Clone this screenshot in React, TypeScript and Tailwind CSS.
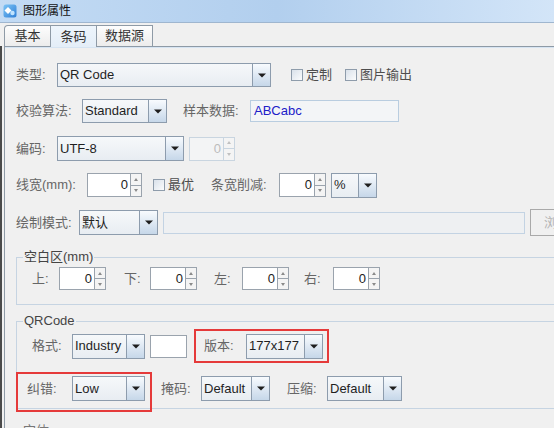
import React from "react";

const Arrow = () => (
  <svg width="8" height="5" viewBox="0 0 8 5">
    <path d="M0 0.5H8L4 4.5Z" fill="#1e1e1e" />
  </svg>
);

function Combo({ w, text, h = "h-[25px]" }: { w: string; text: string; h?: string }) {
  return (
    <div className={`flex shrink-0 border border-[#8d9cad] ${w} ${h}`}>
      <div className="flex flex-1 items-center overflow-hidden whitespace-nowrap bg-gradient-to-b from-[#f6f8fa] to-[#e8edf2] pl-[2px] text-[13px] text-[#1f1f1f]">
        {text}
      </div>
      <div className="flex w-[18px] shrink-0 items-center justify-center border-l border-[#8d9cad] bg-gradient-to-b from-[#f8fbfe] to-[#c6d7e9]">
        <Arrow />
      </div>
    </div>
  );
}

function Spinner({ w, h = "h-[24px]", disabled = false }: { w: string; h?: string; disabled?: boolean }) {
  const b = disabled ? "border-[#c9d5e0]" : "border-[#9aa3ad]";
  const tri = disabled ? "#c0c0c0" : "#8a8a8a";
  return (
    <div className={`flex shrink-0 border ${b} ${w} ${h}`}>
      <div
        className={`flex flex-1 items-center justify-end pr-[2px] text-[13px] ${
          disabled ? "bg-[#f3f4f5] text-[#bcbcbc]" : "bg-white text-[#222]"
        }`}
      >
        0
      </div>
      <div className={`flex w-[11px] shrink-0 flex-col border-l ${b}`}>
        <div className={`flex flex-1 items-center justify-center border-b ${b} bg-[#f4f4f4]`}>
          <svg width="4" height="3" viewBox="0 0 4 3">
            <path d="M0 3H4L2 0Z" fill={tri} />
          </svg>
        </div>
        <div className="flex flex-1 items-center justify-center bg-[#f4f4f4]">
          <svg width="4" height="3" viewBox="0 0 4 3">
            <path d="M0 0H4L2 3Z" fill={tri} />
          </svg>
        </div>
      </div>
    </div>
  );
}

function Check({ label }: { label: string }) {
  return (
    <div className="flex shrink-0 items-center gap-[3px]">
      <div className="h-[12px] w-[12px] border border-[#8e9cab] bg-gradient-to-br from-[#d9e1ea] to-[#fbfcfd]" />
      <span className="text-[13px] text-[#4d4d4d]">{label}</span>
    </div>
  );
}

function Label({ w, children }: { w: string; children: React.ReactNode }) {
  return <div className={`shrink-0 whitespace-nowrap text-[13px] text-[#666] ${w}`}>{children}</div>;
}

export default function App() {
  return (
    <div className="h-[428px] w-[554px] overflow-hidden bg-[#f0f0f0] font-['Liberation_Sans','Noto_Sans_CJK_SC',sans-serif]">
      {/* Title bar */}
      <div className="flex h-[23px] items-center gap-[6px] border-b border-[#9fb6cf] bg-gradient-to-r from-[#c3dbf4] via-[#b2cfee] to-[#d3e5f8] pl-[3px]">
        <svg width="14" height="14" viewBox="0 0 14 14">
          <defs>
            <linearGradient id="ig" x1="0" y1="0" x2="1" y2="1">
              <stop offset="0" stopColor="#7cc4f6" />
              <stop offset="1" stopColor="#2f7fd6" />
            </linearGradient>
          </defs>
          <rect x="0.5" y="0.5" width="13" height="13" rx="2.5" fill="url(#ig)" />
          <path d="M5 3L8.5 6.5L5 10L1.5 6.5Z" fill="#ffffff" />
          <circle cx="9.5" cy="9" r="2.2" fill="#bfe3ff" />
        </svg>
        <span className="text-[12px] text-[#111]">图形属性</span>
      </div>

      {/* Tabs */}
      <div className="flex h-[23px] items-end pl-[4px]">
        <div className="flex h-[21px] w-[47px] items-center justify-center rounded-tl-[4px] border border-b-0 border-[#8e9aa6] bg-gradient-to-b from-[#fdfdfd] to-[#ececec] text-[13px] text-[#333]">
          基本
        </div>
        <div className="relative z-10 -mb-[1px] flex h-[22px] w-[46px] items-center justify-center border border-b-0 border-l-0 border-[#8e9aa6] bg-gradient-to-b from-[#eef5fc] to-[#e4eef8] text-[13px] text-[#333]">
          条码
        </div>
        <div className="flex h-[21px] w-[56px] items-center justify-center border border-b-0 border-l-0 border-[#8e9aa6] bg-gradient-to-b from-[#fdfdfd] to-[#ececec] text-[13px] text-[#333]">
          数据源
        </div>
      </div>

      {/* Body */}
      <div className="flex">
        <div className="h-[400px] w-[2px] shrink-0 bg-[#4a4a4a]" />
        <div className="ml-[2px] h-[400px] w-[620px] shrink-0 border-l border-t border-[#8e9aa6] pl-[11px] pt-[16px] shadow-[inset_0_1px_0_#d6e4f2]">
          {/* Row 1 */}
          <div className="flex h-[24px] items-center">
            <Label w="w-[41px]">类型:</Label>
            <Combo w="w-[214px]" h="h-[24px]" text="QR Code" />
            <div className="ml-[20px]">
              <Check label="定制" />
            </div>
            <div className="ml-[13px]">
              <Check label="图片输出" />
            </div>
          </div>

          {/* Row 2 */}
          <div className="mt-[12px] flex h-[24px] items-center">
            <Label w="w-[66px]">校验算法:</Label>
            <Combo w="w-[85px]" h="h-[24px]" text="Standard" />
            <div className="ml-[16px]">
              <Label w="w-[67px]">样本数据:</Label>
            </div>
            <div className="flex h-[22px] w-[149px] items-center border border-[#b9cde0] bg-[#f3f5f7] pl-[3px] text-[13px] text-[#2020c8]">
              ABCabc
            </div>
          </div>

          {/* Row 3 */}
          <div className="mt-[13px] flex h-[25px] items-center">
            <Label w="w-[41px]">编码:</Label>
            <Combo w="w-[127px]" text="UTF-8" />
            <div className="ml-[5px]">
              <Spinner w="w-[46px]" disabled />
            </div>
          </div>

          {/* Row 4 */}
          <div className="mt-[12px] flex h-[24px] items-center">
            <Label w="w-[71px]">线宽(mm):</Label>
            <Spinner w="w-[55px]" />
            <div className="ml-[11px]">
              <Check label="最优" />
            </div>
            <div className="ml-[17px]">
              <Label w="w-[68px]">条宽削减:</Label>
            </div>
            <Spinner w="w-[47px]" />
            <div className="ml-[5px]">
              <Combo w="w-[46px]" text="%" />
            </div>
          </div>

          {/* Row 5 */}
          <div className="mt-[13px] flex h-[25px] items-center">
            <Label w="w-[63px]">绘制模式:</Label>
            <Combo w="w-[79px]" text="默认" />
            <div className="ml-[5px] h-[22px] w-[362px] shrink-0 border border-[#c3d3e3] bg-[#eef0f2]" />
            <div className="ml-[5px] flex h-[27px] w-[54px] shrink-0 items-center justify-center border border-[#a9a9a9] bg-[#f0f0f0] text-[13px] text-[#b4b4b4]">
              浏览
            </div>
          </div>

          {/* Group 1 */}
          <fieldset className="mt-[15px] w-[600px] border border-[#c6d4e2] p-0">
            <legend className="ml-[6px] px-[1px] text-[13px] leading-[14px] text-[#444]">空白区(mm)</legend>
            <div className="mb-[14px] mt-[3px] flex h-[23px] items-center pl-[15px]">
              <Label w="w-[27px]">上:</Label>
              <Spinner w="w-[47px]" h="h-[23px]" />
              <div className="ml-[18px]">
                <Label w="w-[26px]">下:</Label>
              </div>
              <Spinner w="w-[47px]" h="h-[23px]" />
              <div className="ml-[17px]">
                <Label w="w-[28px]">左:</Label>
              </div>
              <Spinner w="w-[47px]" h="h-[23px]" />
              <div className="ml-[15px]">
                <Label w="w-[29px]">右:</Label>
              </div>
              <Spinner w="w-[47px]" h="h-[23px]" />
            </div>
          </fieldset>

          {/* Group 2 */}
          <fieldset className="mt-[9px] w-[600px] border border-[#c6d4e2] p-0">
            <legend className="ml-[6px] px-[1px] text-[13px] leading-[14px] text-[#444]">QRCode</legend>
            <div className="mt-[1px] flex h-[34px] items-center pl-[15px]">
              <Label w="w-[40px]">格式:</Label>
              <Combo w="w-[73px]" text="Industry" />
              <div className="ml-[5px] h-[23px] w-[37px] shrink-0 border border-[#9aa3ad] bg-white" />
              <div className="ml-[7px] flex h-[34px] w-[135px] shrink-0 items-center border-2 border-[#e53a3a] pl-[8px]">
                <Label w="w-[42px]">版本:</Label>
                <Combo w="w-[77px]" text="177x177" />
              </div>
            </div>
            <div className="-mb-[4px] -ml-[1px] mt-[9px] flex items-start">
              <div className="h-[40px] w-[136px] shrink-0 border-2 border-[#e53a3a] pl-[9px] pt-[2px]">
                <div className="flex h-[25px] items-center">
                  <Label w="w-[45px]">纠错:</Label>
                  <Combo w="w-[73px]" text="Low" />
                </div>
              </div>
              <div className="ml-[9px] mt-[4px] flex h-[25px] items-center">
                <Label w="w-[40px]">掩码:</Label>
                <Combo w="w-[69px]" text="Default" />
                <div className="ml-[17px]">
                  <Label w="w-[40px]">压缩:</Label>
                </div>
                <Combo w="w-[75px]" text="Default" />
              </div>
            </div>
          </fieldset>

          <div className="ml-[7px] mt-[12px] text-[13px] text-[#777]">字体:</div>
        </div>
      </div>
    </div>
  );
}
